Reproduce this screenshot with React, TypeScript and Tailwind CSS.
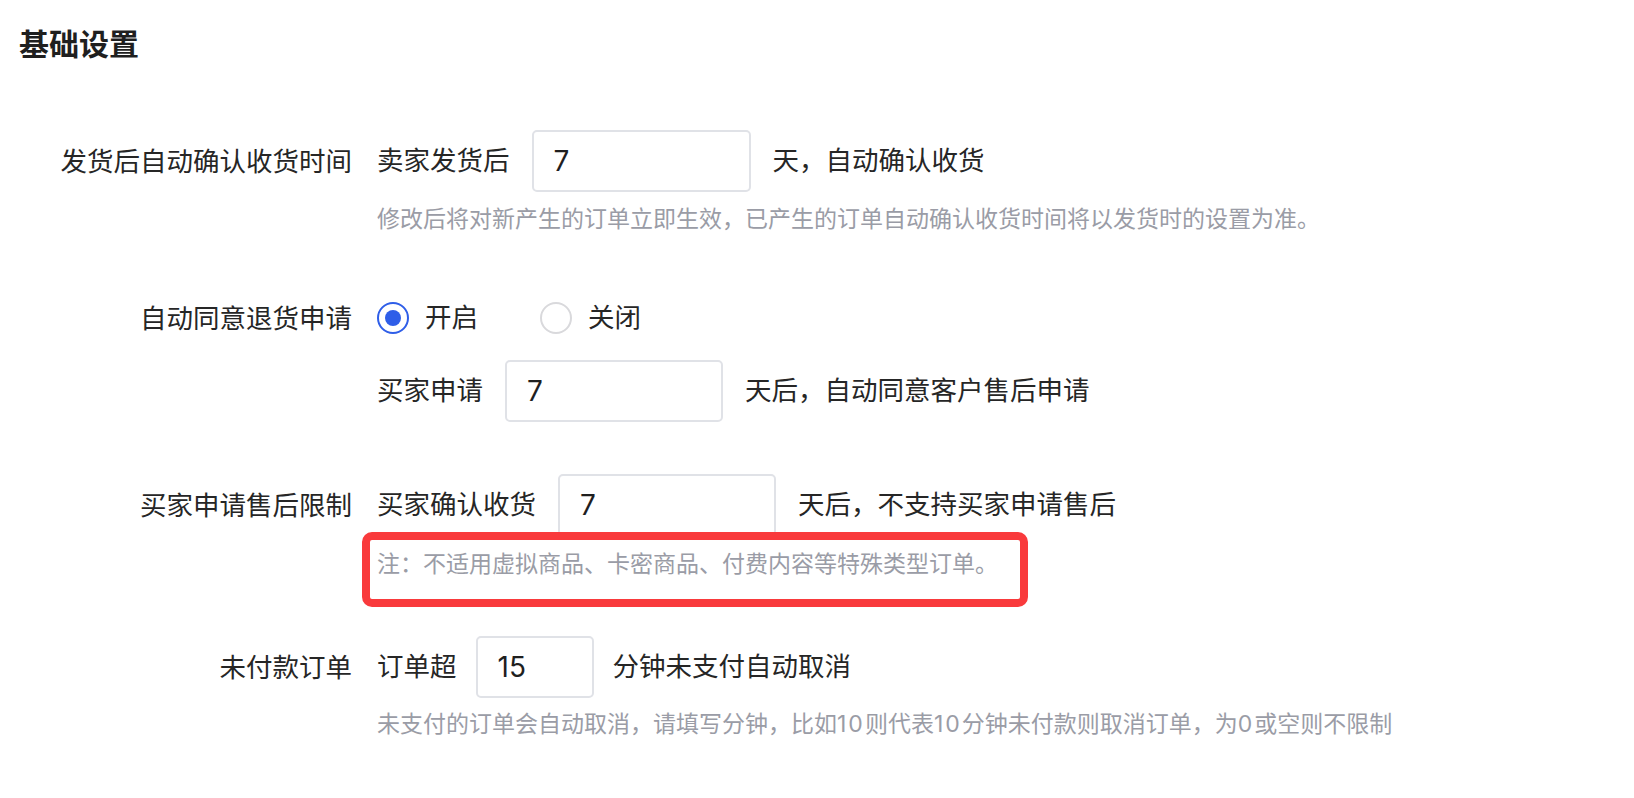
import React from "react";

const labelCls =
  "w-[333px] shrink-0 text-right text-[26.5px] text-[#262626] leading-[62px] h-[62px]";
const textCls = "text-[26.5px] text-[#262626] whitespace-nowrap";
const hintCls = "text-[23px] leading-[30px] text-[#9a9ca6] whitespace-nowrap";
const inputBase =
  "h-[62px] border-2 border-[#e0e2e7] rounded-[5px] pl-[20px] text-[28px] text-[#1f1f1f] outline-none bg-white";

function Radio({ checked, label }: { checked: boolean; label: string }) {
  return (
    <div className="flex items-center gap-[16px]">
      <div
        className={
          checked
            ? "w-[32px] h-[32px] rounded-full border-2 border-[#2f5ee8] flex items-center justify-center"
            : "w-[32px] h-[32px] rounded-full border-2 border-[#d9d9dc] flex items-center justify-center"
        }
      >
        {checked && <div className="w-[16px] h-[16px] rounded-full bg-[#2f5ee8]" />}
      </div>
      <span className={textCls}>{label}</span>
    </div>
  );
}

export default function App() {
  return (
    <div className="min-h-[798px] bg-white pl-[19px] font-[Inter,'Noto_Sans_CJK_SC',sans-serif]">
      <h2 className="pt-[24px] text-[30px] font-bold leading-[40px] text-[#1f1f1f]">基础设置</h2>

      {/* Row 1 */}
      <div className="mt-[66px] flex">
        <div className={labelCls}>发货后自动确认收货时间</div>
        <div className="ml-[25px] flex flex-col">
          <div className="flex items-center h-[62px] gap-[22px]">
            <span className={textCls}>卖家发货后</span>
            <input readOnly value="7" className={inputBase + " w-[219px]"} />
            <span className={textCls}>天，自动确认收货</span>
          </div>
          <div className={"mt-[12px] " + hintCls}>
            修改后将对新产生的订单立即生效，已产生的订单自动确认收货时间将以发货时的设置为准。
          </div>
        </div>
      </div>

      {/* Row 2 */}
      <div className="mt-[64px] flex">
        <div className="w-[333px] shrink-0 text-right text-[26.5px] text-[#262626] leading-[40px] h-[40px]">
          自动同意退货申请
        </div>
        <div className="ml-[25px] flex flex-col">
          <div className="flex items-center h-[40px] gap-[62px]">
            <Radio checked label="开启" />
            <Radio checked={false} label="关闭" />
          </div>
          <div className="mt-[22px] flex items-center h-[62px] gap-[22px]">
            <span className={textCls}>买家申请</span>
            <input readOnly value="7" className={inputBase + " w-[218px]"} />
            <span className={textCls}>天后，自动同意客户售后申请</span>
          </div>
        </div>
      </div>

      {/* Row 3 */}
      <div className="mt-[52px] flex">
        <div className={labelCls}>买家申请售后限制</div>
        <div className="ml-[25px] flex flex-col">
          <div className="flex items-center h-[62px] gap-[22px]">
            <span className={textCls}>买家确认收货</span>
            <input readOnly value="7" className={inputBase + " w-[218px]"} />
            <span className={textCls}>天后，不支持买家申请售后</span>
          </div>
          <div className="relative mt-[13px]">
            <div className={hintCls}>注：不适用虚拟商品、卡密商品、付费内容等特殊类型订单。</div>
            <div className="absolute left-[-15px] top-[-17px] w-[666px] h-[75px] border-[8px] border-[#f93a3c] rounded-[10px] z-10 pointer-events-none" />
          </div>
        </div>
      </div>

      {/* Row 4 */}
      <div className="mt-[57px] flex">
        <div className={labelCls}>未付款订单</div>
        <div className="ml-[25px] flex flex-col">
          <div className="flex items-center h-[62px] gap-[19px]">
            <span className={textCls}>订单超</span>
            <input readOnly value="15" className={inputBase + " w-[118px]"} />
            <span className={textCls}>分钟未支付自动取消</span>
          </div>
          <div className={"mt-[11px] " + hintCls}>
            未支付的订单会自动取消，请填写分钟，比如<span className="tracking-[2px]">10</span>则代表<span className="tracking-[2px]">10</span>分钟未付款则取消订单，为<span className="tracking-[2px]">0</span>或空则不限制
          </div>
        </div>
      </div>
    </div>
  );
}
